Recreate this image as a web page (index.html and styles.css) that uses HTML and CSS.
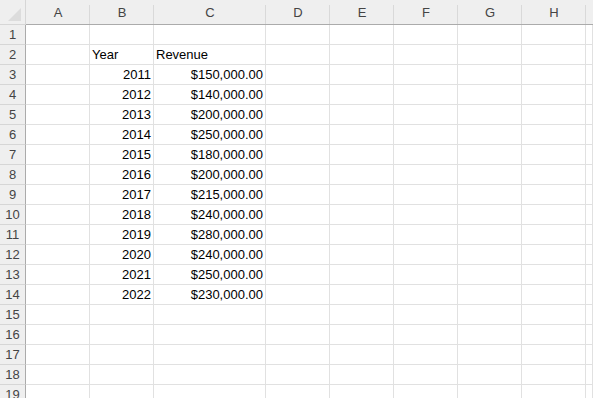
FILE: index.html
```html
<!DOCTYPE html>
<html lang="en">
<head>
  <meta charset="UTF-8">
  <title>Revenue by Year</title>
  <link rel="stylesheet" href="styles.css">
</head>
<body>
  <div class="sheet">
    <!-- cabecera de columnas -->
    <div class="corner"><span class="corner-tri"></span></div>
    <div class="col-head">A</div>
    <div class="col-head">B</div>
    <div class="col-head">C</div>
    <div class="col-head">D</div>
    <div class="col-head">E</div>
    <div class="col-head">F</div>
    <div class="col-head">G</div>
    <div class="col-head">H</div>
    <div class="col-head last"></div>

    <div class="row-head">1</div>
    <div class="cell"></div><div class="cell"></div><div class="cell"></div><div class="cell"></div><div class="cell"></div><div class="cell"></div><div class="cell"></div><div class="cell"></div><div class="cell"></div>

    <div class="row-head">2</div>
    <div class="cell"></div><div class="cell">Year</div><div class="cell">Revenue</div><div class="cell"></div><div class="cell"></div><div class="cell"></div><div class="cell"></div><div class="cell"></div><div class="cell"></div>

    <div class="row-head">3</div>
    <div class="cell"></div><div class="cell num">2011</div><div class="cell num">$150,000.00</div><div class="cell"></div><div class="cell"></div><div class="cell"></div><div class="cell"></div><div class="cell"></div><div class="cell"></div>

    <div class="row-head">4</div>
    <div class="cell"></div><div class="cell num">2012</div><div class="cell num">$140,000.00</div><div class="cell"></div><div class="cell"></div><div class="cell"></div><div class="cell"></div><div class="cell"></div><div class="cell"></div>

    <div class="row-head">5</div>
    <div class="cell"></div><div class="cell num">2013</div><div class="cell num">$200,000.00</div><div class="cell"></div><div class="cell"></div><div class="cell"></div><div class="cell"></div><div class="cell"></div><div class="cell"></div>

    <div class="row-head">6</div>
    <div class="cell"></div><div class="cell num">2014</div><div class="cell num">$250,000.00</div><div class="cell"></div><div class="cell"></div><div class="cell"></div><div class="cell"></div><div class="cell"></div><div class="cell"></div>

    <div class="row-head">7</div>
    <div class="cell"></div><div class="cell num">2015</div><div class="cell num">$180,000.00</div><div class="cell"></div><div class="cell"></div><div class="cell"></div><div class="cell"></div><div class="cell"></div><div class="cell"></div>

    <div class="row-head">8</div>
    <div class="cell"></div><div class="cell num">2016</div><div class="cell num">$200,000.00</div><div class="cell"></div><div class="cell"></div><div class="cell"></div><div class="cell"></div><div class="cell"></div><div class="cell"></div>

    <div class="row-head">9</div>
    <div class="cell"></div><div class="cell num">2017</div><div class="cell num">$215,000.00</div><div class="cell"></div><div class="cell"></div><div class="cell"></div><div class="cell"></div><div class="cell"></div><div class="cell"></div>

    <div class="row-head">10</div>
    <div class="cell"></div><div class="cell num">2018</div><div class="cell num">$240,000.00</div><div class="cell"></div><div class="cell"></div><div class="cell"></div><div class="cell"></div><div class="cell"></div><div class="cell"></div>

    <div class="row-head">11</div>
    <div class="cell"></div><div class="cell num">2019</div><div class="cell num">$280,000.00</div><div class="cell"></div><div class="cell"></div><div class="cell"></div><div class="cell"></div><div class="cell"></div><div class="cell"></div>

    <div class="row-head">12</div>
    <div class="cell"></div><div class="cell num">2020</div><div class="cell num">$240,000.00</div><div class="cell"></div><div class="cell"></div><div class="cell"></div><div class="cell"></div><div class="cell"></div><div class="cell"></div>

    <div class="row-head">13</div>
    <div class="cell"></div><div class="cell num">2021</div><div class="cell num">$250,000.00</div><div class="cell"></div><div class="cell"></div><div class="cell"></div><div class="cell"></div><div class="cell"></div><div class="cell"></div>

    <div class="row-head">14</div>
    <div class="cell"></div><div class="cell num">2022</div><div class="cell num">$230,000.00</div><div class="cell"></div><div class="cell"></div><div class="cell"></div><div class="cell"></div><div class="cell"></div><div class="cell"></div>

    <div class="row-head">15</div>
    <div class="cell"></div><div class="cell"></div><div class="cell"></div><div class="cell"></div><div class="cell"></div><div class="cell"></div><div class="cell"></div><div class="cell"></div><div class="cell"></div>

    <div class="row-head">16</div>
    <div class="cell"></div><div class="cell"></div><div class="cell"></div><div class="cell"></div><div class="cell"></div><div class="cell"></div><div class="cell"></div><div class="cell"></div><div class="cell"></div>

    <div class="row-head">17</div>
    <div class="cell"></div><div class="cell"></div><div class="cell"></div><div class="cell"></div><div class="cell"></div><div class="cell"></div><div class="cell"></div><div class="cell"></div><div class="cell"></div>

    <div class="row-head">18</div>
    <div class="cell"></div><div class="cell"></div><div class="cell"></div><div class="cell"></div><div class="cell"></div><div class="cell"></div><div class="cell"></div><div class="cell"></div><div class="cell"></div>

    <div class="row-head">19</div>
    <div class="cell"></div><div class="cell"></div><div class="cell"></div><div class="cell"></div><div class="cell"></div><div class="cell"></div><div class="cell"></div><div class="cell"></div><div class="cell"></div>
  </div>
</body>
</html>
```

FILE: styles.css
```css
body {
  margin: 0;
  background-color: white;
  font-family: "Liberation Sans", Arial, sans-serif;
  font-size: 13px;
  color: black;
  overflow: hidden;
}

.sheet {
  display: grid;
  grid-template-columns: 26px 64px 64px 112px 64px 64px 64px 64px 64px 1fr;
  grid-template-rows: 25px;
  grid-auto-rows: 20px;
}

.corner {
  background-color: #efefef;
  border-right: 1px solid #d6d6d6;
  border-bottom: 1px solid #d6d6d6;
  box-sizing: border-box;
  position: relative;
}

/* triangulo gris de la esquina */
.corner-tri {
  position: absolute;
  right: 4px;
  bottom: 3px;
  width: 0;
  height: 0;
  border-left: 13px solid transparent;
  border-bottom: 13px solid #dcdcdc;
}

.col-head {
  background-color: #efefef;
  border-bottom: 1px solid #ababab;
  box-sizing: border-box;
  color: #444;
  display: flex;
  align-items: center;
  justify-content: center;
  padding-top: 1px;
  position: relative;
}

.col-head::after {
  content: "";
  position: absolute;
  right: 0;
  top: 5px;
  bottom: 0;
  width: 1px;
  background-color: #d9d9d9;
}

.col-head.last::after {
  display: none;
}

.row-head {
  background-color: #efefef;
  border-right: 1px solid #ababab;
  border-bottom: 1px solid #d6d6d6;
  box-sizing: border-box;
  color: #444;
  display: flex;
  align-items: center;
  justify-content: center;
}

.cell {
  border-right: 1px solid #e1e1e1;
  border-bottom: 1px solid #e1e1e1;
  box-sizing: border-box;
  padding: 0 2px 2px 2px;
  display: flex;
  align-items: flex-end;
  white-space: nowrap;
  line-height: 15px;
}

.cell.num {
  justify-content: flex-end;
}
```
